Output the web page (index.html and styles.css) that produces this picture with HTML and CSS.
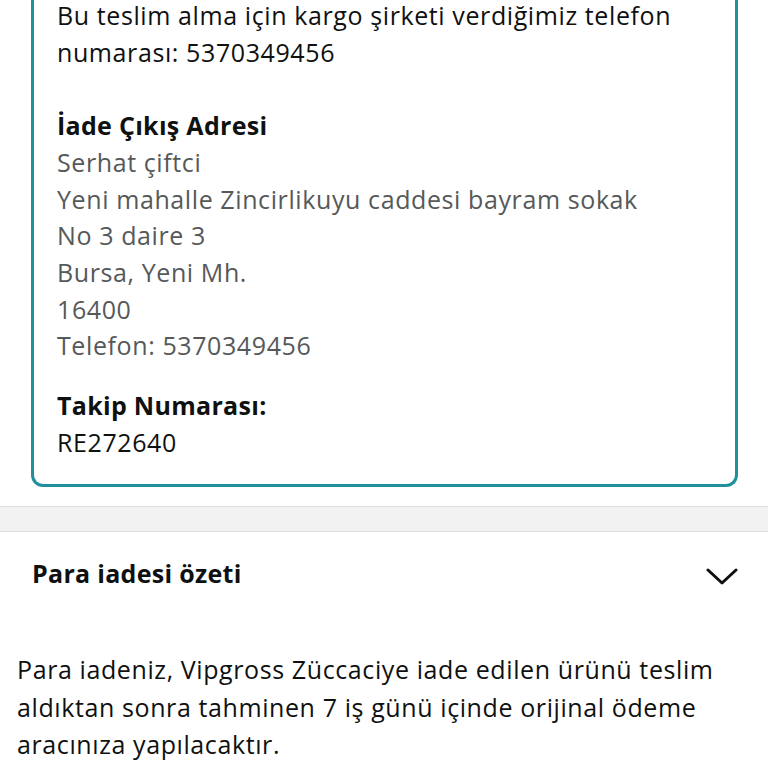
FILE: index.html
```html
<!DOCTYPE html>
<html lang="tr">
<head>
<meta charset="utf-8">
<link rel="stylesheet" href="styles.css">
</head>
<body>
<div class="card">
  <p class="line">Bu teslim alma için kargo şirketi verdiğimiz telefon numarası: 5370349456</p>
  <div class="block">
    <div class="head">İade Çıkış Adresi</div>
    <div class="gray">Serhat çiftci</div>
    <div class="gray">Yeni mahalle Zincirlikuyu caddesi bayram sokak</div>
    <div class="gray">No 3 daire 3</div>
    <div class="gray">Bursa, Yeni Mh.</div>
    <div class="gray">16400</div>
    <div class="gray">Telefon: 5370349456</div>
  </div>
  <div class="block track">
    <div class="head">Takip Numarası:</div>
    <div class="line">RE272640</div>
  </div>
</div>
<div class="band"></div>
<div class="summary">
  <div class="sum-title">Para iadesi özeti</div>
  <svg class="chev" width="32" height="18" viewBox="0 0 32 18"><path d="M2 2 L16 15 L30 2" fill="none" stroke="#0f1111" stroke-width="3" stroke-linecap="round" stroke-linejoin="round"/></svg>
</div>
<p class="para">Para iadeniz, Vipgross Züccaciye iade edilen ürünü teslim aldıktan sonra tahminen 7 iş günü içinde orijinal ödeme aracınıza yapılacaktır.</p>
</body>
</html>
```
FILE: styles.css
```css
html, body {
  margin: 0;
  padding: 0;
  background: #ffffff;
}
body {
  font-family: "Open Sans", "Noto Sans", sans-serif;
  font-size: 25px;
  line-height: 36.7px;
  letter-spacing: 0.6px;
  color: #0f1111;
  width: 768px;
  height: 768px;
  overflow: hidden;
}
.card {
  margin: -3px 30px 0 31px;
  border: 3px solid #22909c;
  border-top: none;
  border-radius: 0 0 12px 12px;
  padding: 0 30px 24px 23px;
}
.line {
  margin: 0;
}
.block {
  margin-top: 36.7px;
}
.track {
  margin-top: 23px;
}
.head {
  font-weight: 700;
  letter-spacing: 0.3px;
}
.gray {
  color: #565959;
}
.band {
  margin-top: 19px;
  height: 24px;
  background: #f2f2f2;
  border-top: 1px solid #dddddd;
  border-bottom: 1px solid #dddddd;
}
.summary {
  display: flex;
  align-items: center;
  justify-content: space-between;
  padding: 22px 30px 0 32px;
  height: 37px;
}
.sum-title {
  font-weight: 700;
  letter-spacing: 0.3px;
}
.chev {
  display: block;
  margin-top: 8px;
}
.para {
  margin: 60px 0 0 17px;
  padding-right: 20px;
  line-height: 37.5px;
}
```
